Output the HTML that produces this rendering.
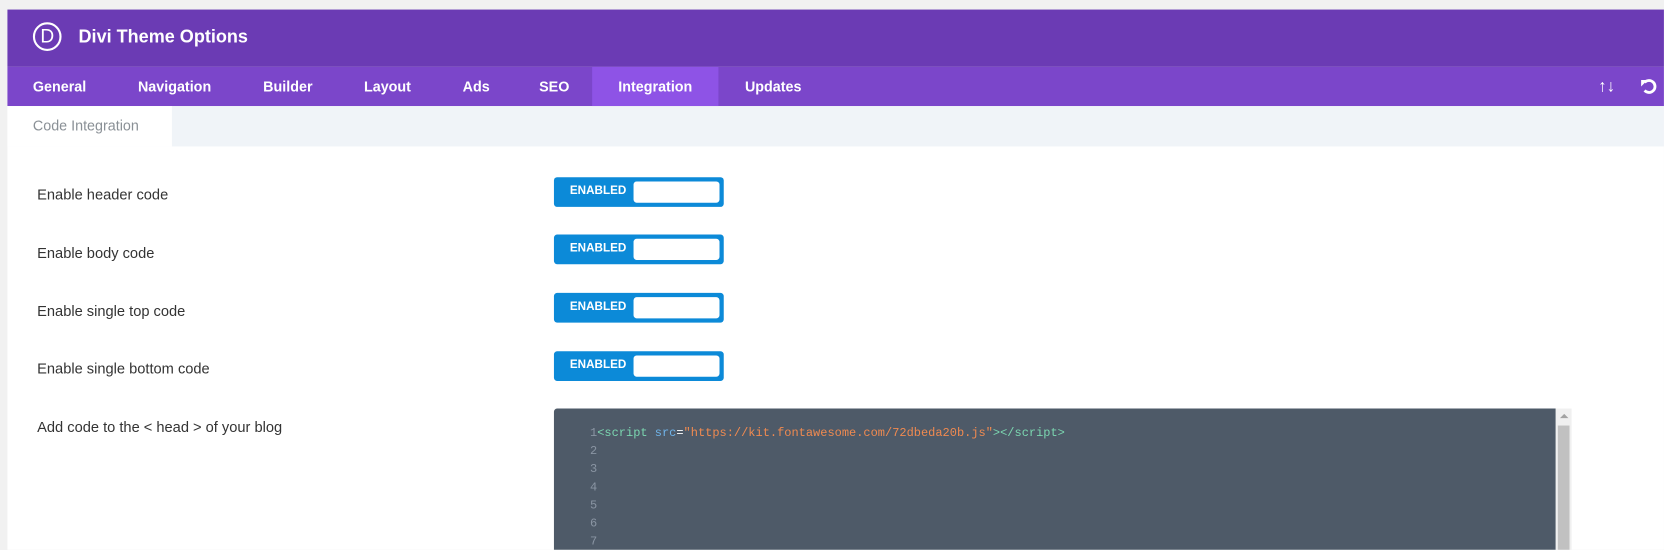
<!DOCTYPE html>
<html style="height:550px;overflow:hidden"><head><style>
*{margin:0;padding:0;box-sizing:border-box}
body{width:1664px;height:550px;background:#f1f1f1;font-family:"Liberation Sans",sans-serif;overflow:hidden;position:relative}
.clip{position:absolute;left:0;top:0;width:1664px;height:550px;overflow:hidden}
.wrap{position:absolute;left:0;top:0;width:1568px;height:518px;transform:scale(1.0612);transform-origin:0 0;overflow:hidden}
.panel{position:absolute;left:7px;top:9px;width:1561px;height:520px;background:#fff}
.hdr{position:absolute;left:0;top:0;width:100%;height:54px;background:#6b3bb4}
.logo{position:absolute;left:24px;top:12px;width:27px;height:27px;border:2px solid #fff;border-radius:50%;color:#fff;font-size:18px;text-align:center;line-height:23px}
.title{position:absolute;left:67px;top:16px;color:#fff;font-size:17px;font-weight:bold}
.tabs{position:absolute;left:0;top:54px;width:100%;height:37px;background:#7b46ca}
.tab{position:absolute;top:0;height:37px;line-height:37px;color:#fff;font-size:13.5px;font-weight:bold}
.act{background:#8e53e6;text-align:center}
.sub{position:absolute;left:0;top:91px;width:100%;height:38px;background:#f0f4f8}
.subt{position:absolute;left:0;top:0;width:155px;height:38px;background:#fff;color:#8a9096;font-size:13.5px;line-height:38px;padding-left:24px}
.lbl{position:absolute;left:28px;font-size:13.8px;color:#333}
.tg{position:absolute;left:515px;width:160px;height:28px;background:#0c8ad8;border-radius:3px}
.tg b{position:absolute;left:15px;top:7px;color:#fff;font-size:11px}
.tg i{position:absolute;left:75px;top:4px;width:81px;height:20px;background:#fff;border-radius:3px}
.code{position:absolute;left:515px;top:376px;width:944px;height:160px;background:#4e5a68;border-radius:3px 0 0 0;font-family:"Liberation Mono",monospace;font-size:11.3px}
.ln{position:absolute;left:34px;color:#8a95a3}
.sb{position:absolute;left:1459px;top:376px;width:15px;height:160px;background:#f0f0f0}
.sb i{position:absolute;left:2px;top:16px;width:11px;height:140px;background:#c1c1c1}
</style></head><body>
<div class="clip">
<div class="wrap">
<div class="panel">
<div class="hdr"><div class="logo">D</div><div class="title">Divi Theme Options</div></div>
<div class="tabs">
<div class="tab" style="left:24px">General</div>
<div class="tab" style="left:123px">Navigation</div>
<div class="tab" style="left:241px">Builder</div>
<div class="tab" style="left:336px">Layout</div>
<div class="tab" style="left:429px">Ads</div>
<div class="tab" style="left:501px">SEO</div>
<div class="tab act" style="left:551px;width:119px">Integration</div>
<div class="tab" style="left:695px">Updates</div>
<div class="tab" style="left:1499px;font-size:16px">↑↓</div>
<svg style="position:absolute;left:1539px;top:11px" width="15" height="15" viewBox="0 0 16 16"><path d="M4 4 A6 6 0 1 1 4 12" fill="none" stroke="#fff" stroke-width="2.8"/><path d="M0.5 1.5 L7 1.5 L0.5 8Z" fill="#fff"/></svg>
</div>
<div class="sub"><div class="subt">Code Integration</div></div>
<div class="lbl" style="top:167px">Enable header code</div>
<div class="lbl" style="top:222px">Enable body code</div>
<div class="lbl" style="top:277px">Enable single top code</div>
<div class="lbl" style="top:331px">Enable single bottom code</div>
<div class="lbl" style="top:386px">Add code to the &lt; head &gt; of your blog</div>
<div class="tg" style="top:158px"><b>ENABLED</b><i></i></div>
<div class="tg" style="top:212px"><b>ENABLED</b><i></i></div>
<div class="tg" style="top:267px"><b>ENABLED</b><i></i></div>
<div class="tg" style="top:322px"><b>ENABLED</b><i></i></div>
<div class="code">
<div class="ln" style="top:18px">1<span style="color:#7bd6b0">&lt;script </span><span style="color:#6fb3e8">src</span><span style="color:#fff">=</span><span style="color:#f08a50">"https://kit.fontawesome.com/72dbeda20b.js"</span><span style="color:#7bd6b0">&gt;&lt;/script&gt;</span></div>
<div class="ln" style="top:35px">2</div><div class="ln" style="top:52px">3</div><div class="ln" style="top:69px">4</div><div class="ln" style="top:86px">5</div><div class="ln" style="top:103px">6</div><div class="ln" style="top:120px">7</div>
</div>
<div class="sb"><i></i><span style="position:absolute;left:4px;top:5px;width:0;height:0;border-left:4px solid transparent;border-right:4px solid transparent;border-bottom:4px solid #a3a3a3"></span></div>
</div>
</div>
</div>
</body></html>
